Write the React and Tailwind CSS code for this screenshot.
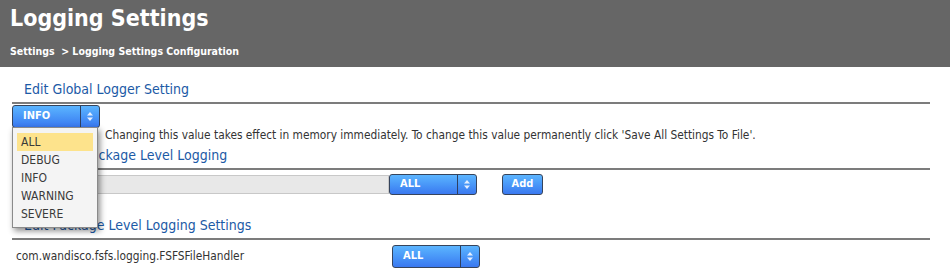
import React from "react";

const levels = ["ALL", "DEBUG", "INFO", "WARNING", "SEVERE"];

const Arrows = () => (
  <svg width="6" height="9" viewBox="0 0 6 9" fill="#e6efff">
    <path d="M3 0 L6 3.5 H0 Z" />
    <path d="M3 9 L6 5.5 H0 Z" />
  </svg>
);

const LevelSelect = ({ value, className = "" }) => (
  <div
    className={
      "flex w-[88px] rounded-[3px] border border-[#36445c] bg-gradient-to-b from-[#5cb5ff] to-[#3a78f0] text-white font-bold text-[11px] " +
      className
    }
  >
    <div className="flex-1 flex items-center pl-[10px]">{value}</div>
    <div className="w-[19px] border-l border-[#2e3f60] flex items-center justify-center">
      <Arrows />
    </div>
  </div>
);

const Heading = ({ children }) => (
  <div className="border-b-2 border-[#7c7c7c] pl-[12px] text-[14px] text-[#1c5aa6] leading-[18px] pb-[4px]">
    {children}
  </div>
);

export default function App() {
  return (
    <div
      className="relative w-[950px] h-[273px] bg-white overflow-hidden"
      style={{ fontFamily: "'DejaVu Sans Condensed', 'DejaVu Sans', Verdana, sans-serif" }}
    >
      <div className="h-[67px] bg-[#666666] px-[10px] pt-[3px] text-white">
        <h1 className="text-[23px] font-bold leading-[30px]">Logging Settings</h1>
        <div className="mt-[11px] text-[10.5px] font-bold leading-[14px]">
          Settings&nbsp; &gt; Logging Settings Configuration
        </div>
      </div>

      <div className="pl-[12px] pr-[20px]">
        <div className="pt-[13px]">
          <Heading>Edit Global Logger Setting</Heading>
        </div>
        <LevelSelect value="INFO" className="mt-[1px] h-[23px]" />
        <p className="pl-[93px] text-[11.8px] text-[#333] leading-[14px]">
          Changing this value takes effect in memory immediately. To change this value permanently click 'Save All Settings To File'.
        </p>

        <div className="pt-[4px]">
          <Heading>Add New Package Level Logging</Heading>
        </div>
        <div className="flex items-start mt-[5px]">
          <div className="w-[377px] h-[19px] bg-[#e8e8e8] border border-[#c8c8c8]" />
          <LevelSelect value="ALL" className="h-[21px] -mt-[1px]" />
          <button className="ml-[25px] -mt-[1px] h-[21px] w-[41px] rounded-[3px] border border-[#36445c] bg-gradient-to-b from-[#5cb5ff] to-[#3a78f0] text-white font-bold text-[11px]">
            Add
          </button>
        </div>

        <div className="pt-[21px]">
          <Heading>Edit Package Level Logging Settings</Heading>
        </div>
        <div className="flex items-center mt-[5px]">
          <div className="w-[380px] pl-[4px] text-[11.8px] text-[#333]">com.wandisco.fsfs.logging.FSFSFileHandler</div>
          <LevelSelect value="ALL" className="h-[23px]" />
        </div>
      </div>

      <div className="absolute left-[12px] top-[127px] w-[86px] bg-[#f4f4f4] border border-[#8a8a8a] shadow-[2px_3px_6px_rgba(0,0,0,0.45)] pt-[5px] pb-[4px] px-[4px]">
        {levels.map((l) => (
          <div
            key={l}
            className={
              "h-[18px] leading-[18px] pl-[4px] text-[12px] text-[#3a3a3a] " +
              (l === "ALL" ? "bg-[#fde38c]" : "")
            }
          >
            {l}
          </div>
        ))}
      </div>
    </div>
  );
}
